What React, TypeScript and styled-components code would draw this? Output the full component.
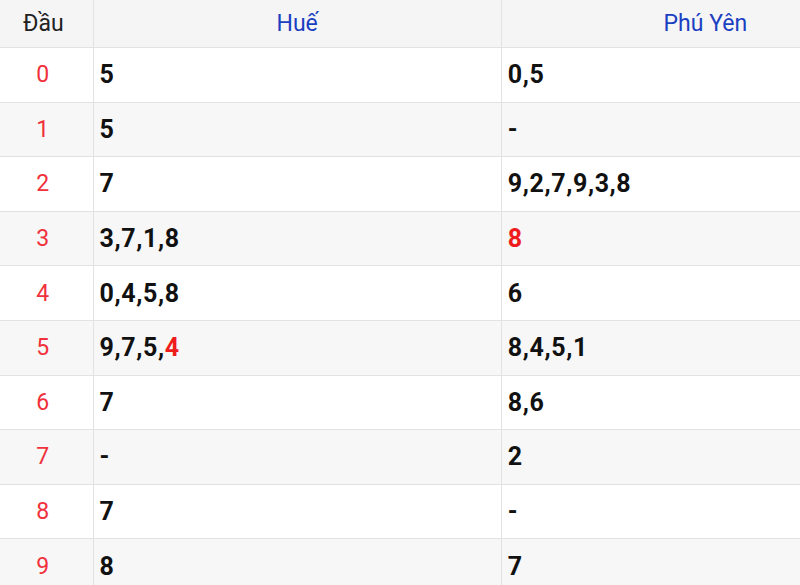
import React from 'react';
import styled, { createGlobalStyle } from 'styled-components';

type Digit = { value: string; hot?: boolean };

type Row = {
  head: number;
  hue: Digit[];
  phuYen: Digit[];
};

const d = (s: string, hotIndex = -1): Digit[] =>
  s === '-' ? [{ value: '-' }] : s.split(',').map((v, i) => ({ value: v, hot: i === hotIndex }));

const ROWS: Row[] = [
  { head: 0, hue: d('5'), phuYen: d('0,5') },
  { head: 1, hue: d('5'), phuYen: d('-') },
  { head: 2, hue: d('7'), phuYen: d('9,2,7,9,3,8') },
  { head: 3, hue: d('3,7,1,8'), phuYen: d('8', 0) },
  { head: 4, hue: d('0,4,5,8'), phuYen: d('6') },
  { head: 5, hue: d('9,7,5,4', 3), phuYen: d('8,4,5,1') },
  { head: 6, hue: d('7'), phuYen: d('8,6') },
  { head: 7, hue: d('-'), phuYen: d('2') },
  { head: 8, hue: d('7'), phuYen: d('-') },
  { head: 9, hue: d('8'), phuYen: d('7') },
];

const GlobalStyle = createGlobalStyle`
  html, body {
    margin: 0;
    padding: 0;
    background: #ffffff;
    overflow: hidden;
  }
  body {
    font-family: Roboto, "Noto Sans", Arial, sans-serif;
  }
`;

const DigitList: React.FC<{ digits: Digit[] }> = ({ digits }) => (
  <>
    {digits.map((item, i) => (
      <React.Fragment key={i}>
        {i > 0 && ','}
        {item.hot ? <Hot>{item.value}</Hot> : item.value}
      </React.Fragment>
    ))}
  </>
);

const App: React.FC = () => {
  return (
    <>
      <GlobalStyle />
      <Table>
        <colgroup>
          <col style={{ width: 93 }} />
          <col style={{ width: 408 }} />
          <col style={{ width: 408 }} />
        </colgroup>
        <thead>
          <tr>
            <HeadCell>Đầu</HeadCell>
            <HeadCell $province>Huế</HeadCell>
            <HeadCell $province>Phú Yên</HeadCell>
          </tr>
        </thead>
        <tbody>
          {ROWS.map(row => (
            <BodyRow key={row.head} $striped={row.head % 2 === 1}>
              <HeadNumber>{row.head}</HeadNumber>
              <TailCell>
                <DigitList digits={row.hue} />
              </TailCell>
              <TailCell>
                <DigitList digits={row.phuYen} />
              </TailCell>
            </BodyRow>
          ))}
        </tbody>
      </Table>
    </>
  );
};

const Table = styled.table`
  width: 910px;
  table-layout: fixed;
  border-collapse: collapse;
  font-family: Roboto, "Noto Sans", Arial, sans-serif;
`;

const HeadCell = styled.th<{ $province?: boolean }>`
  height: 47px;
  padding: 0;
  background-color: #f5f5f5;
  border: 1px solid #e2e2e2;
  border-top: none;
  border-left: none;
  font-size: 23px;
  font-weight: 400;
  text-align: center;
  vertical-align: middle;
  color: ${p => (p.$province ? '#1b3fc2' : '#222222')};
  &:first-child {
    padding-right: 6px;
  }
`;

const BodyRow = styled.tr<{ $striped: boolean }>`
  height: 54.6px;
  background-color: ${p => (p.$striped ? '#f7f7f7' : '#ffffff')};
`;

const HeadNumber = styled.td`
  padding: 0 7px 0 0;
  border-right: 1px solid #e2e2e2;
  border-bottom: 1px solid #e2e2e2;
  text-align: center;
  font-size: 23px;
  color: #f0313b;
`;

const TailCell = styled.td`
  padding: 0 0 0 6px;
  border-right: 1px solid #e2e2e2;
  border-bottom: 1px solid #e2e2e2;
  font-size: 25px;
  font-weight: 700;
  color: #111111;
  letter-spacing: 0.6px;
`;

const Hot = styled.span`
  color: #ee1c1c;
`;

export default App;
